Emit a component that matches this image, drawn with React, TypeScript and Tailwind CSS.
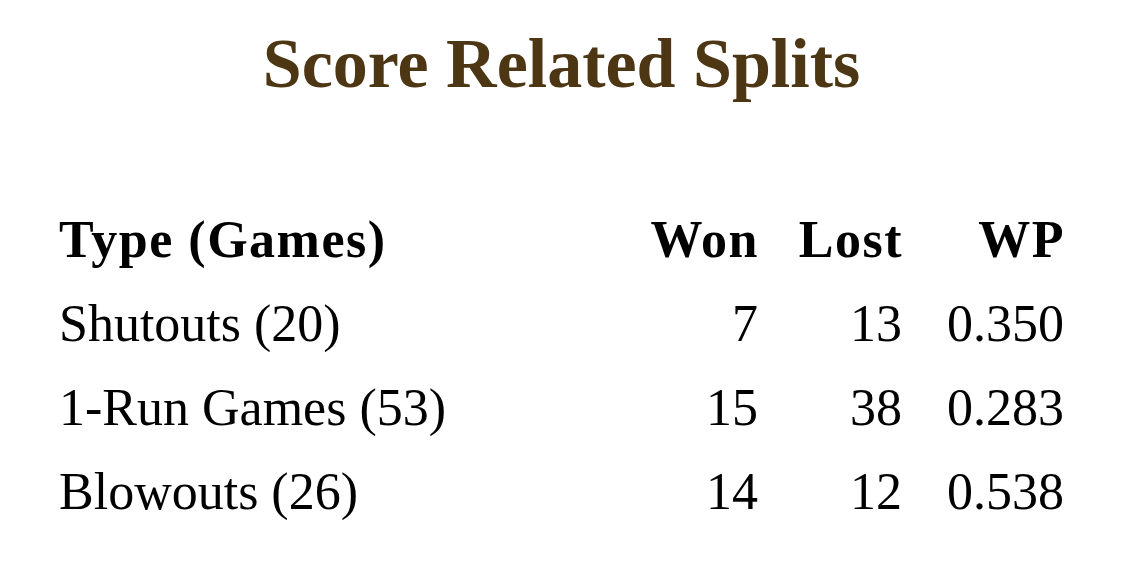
import React from "react";

const rows = [
  { type: "Shutouts (20)", won: "7", lost: "13", wp: "0.350" },
  { type: "1-Run Games (53)", won: "15", lost: "38", wp: "0.283" },
  { type: "Blowouts (26)", won: "14", lost: "12", wp: "0.538" },
];

export default function App() {
  return (
    <div
      className="w-[1133px] h-[563px] bg-white text-black overflow-hidden"
      style={{ fontFamily: '"Liberation Serif", "Times New Roman", serif' }}
    >
      <h1 className="pt-[29px] pr-[10px] text-center text-[70px] leading-[70px] font-bold text-[#4d3613]">
        Score Related Splits
      </h1>
      <div className="mt-[99px] px-[59px]">
        <div className="grid grid-cols-[555px_144px_144px_162px] text-[52px] leading-[84px]">
          <div className="font-bold tracking-[1.5px]">Type (Games)</div>
          <div className="font-bold text-right tracking-[1.5px] -mr-[1px]">Won</div>
          <div className="font-bold text-right tracking-[1.5px] -mr-[1px]">Lost</div>
          <div className="font-bold text-right tracking-[1.5px] -mr-[1px]">WP</div>
          {rows.map((r) => (
            <React.Fragment key={r.type}>
              <div>{r.type}</div>
              <div className="text-right">{r.won}</div>
              <div className="text-right">{r.lost}</div>
              <div className="text-right">{r.wp}</div>
            </React.Fragment>
          ))}
        </div>
      </div>
    </div>
  );
}
